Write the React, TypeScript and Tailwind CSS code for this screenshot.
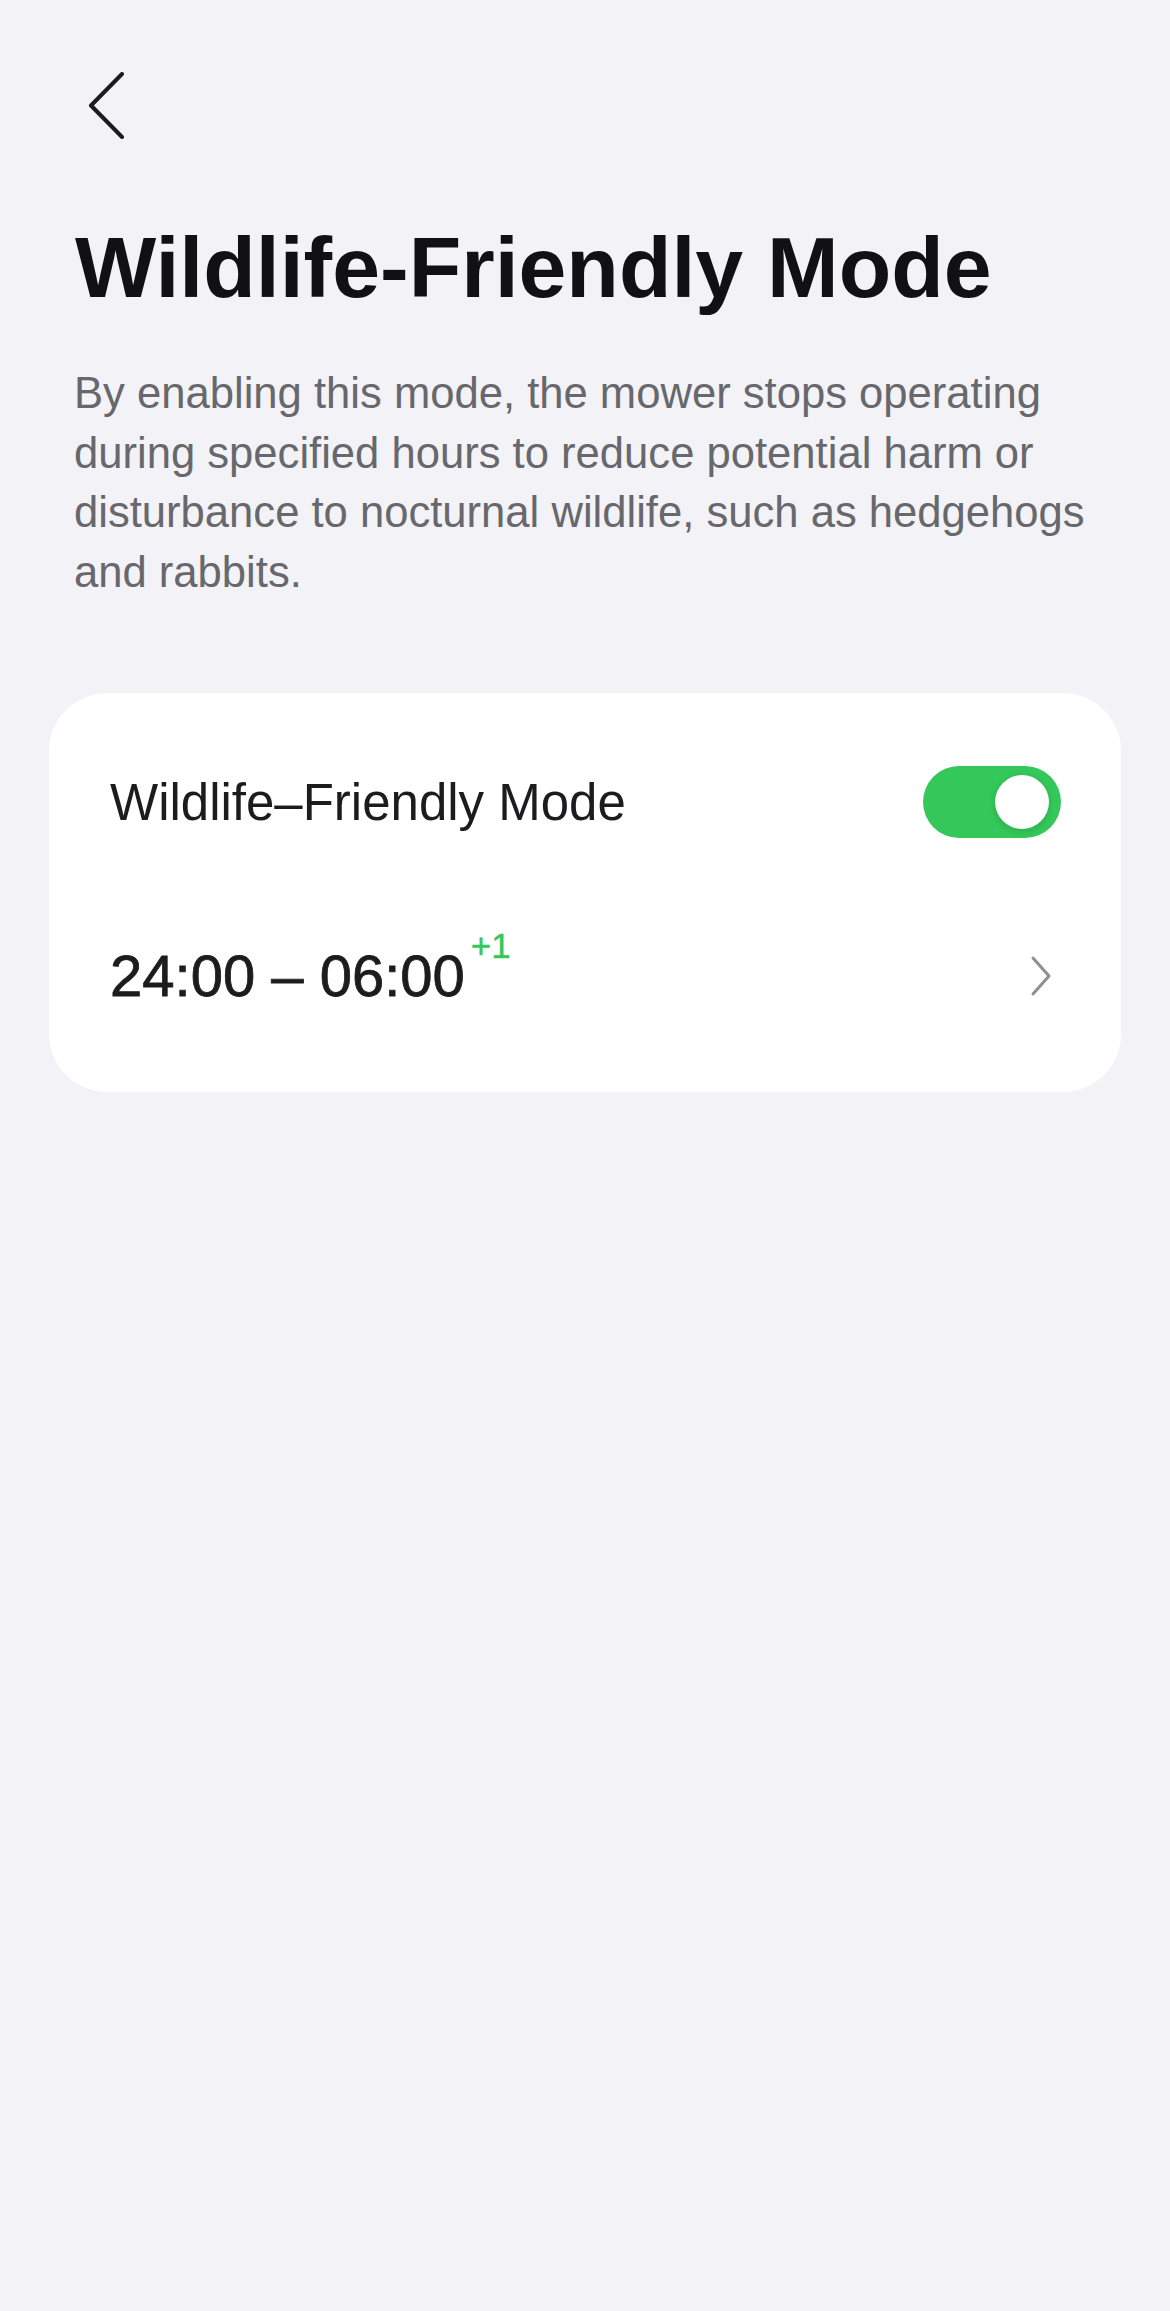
import React from "react";

export default function App() {
  return (
    <div
      className="min-h-[2311px] w-full bg-[#f2f2f7] text-[#1c1c1e]"
      style={{ fontFamily: '"Liberation Sans", Arial, sans-serif' }}
    >
      {/* Header */}
      <div className="pl-[87px] pt-[72px]">
        <svg width="38" height="67" viewBox="0 0 38 67" fill="none" className="block">
          <path d="M35 2 L4 33.5 L35 65" stroke="#1c1c1e" strokeWidth="4" strokeLinecap="round" strokeLinejoin="round" />
        </svg>
      </div>

      {/* Title */}
      <h1 className="mt-[85px] pl-[75px] text-[86px] font-bold leading-none tracking-normal text-[#111114]">
        Wildlife-Friendly Mode
      </h1>

      {/* Description */}
      <p className="mt-[54px] pl-[74px] w-[1120px] text-[43.6px] leading-[59.5px] text-[#67676c]">
        By enabling this mode, the mower stops operating during specified hours to reduce potential harm or disturbance to nocturnal wildlife, such as hedgehogs and rabbits.
      </p>

      {/* Card */}
      <div className="mx-[49px] mt-[91px] h-[399px] rounded-[58px] bg-white pl-[61px] pr-[60px] pt-[73px]">
        <div className="flex h-[72px] items-center justify-between">
          <span className="text-[51px] leading-none text-[#1c1c1e]">Wildlife–Friendly Mode</span>
          <div className="flex h-[72px] w-[138px] items-center justify-end rounded-full bg-[#34c759] pr-[12px]">
            <div className="h-[54px] w-[54px] rounded-full bg-white shadow-[0_2px_6px_rgba(0,0,0,0.15)]" />
          </div>
        </div>

        <div className="mt-[102px] flex h-[72px] items-center justify-between">
          <span className="relative text-[58px] leading-none text-[#1c1c1e] [-webkit-text-stroke:0.8px_#1c1c1e]">
            24:00 – 06:00
            <span className="absolute left-full top-[-19px] ml-[6px] text-[35px] leading-none text-[#34c759] [-webkit-text-stroke:0.4px_#34c759]">+1</span>
          </span>
          <svg width="22" height="42" viewBox="0 0 22 42" fill="none" className="mr-[9px] block">
            <path d="M3 3 L19 21 L3 39" stroke="#8e8e93" strokeWidth="3" strokeLinecap="round" strokeLinejoin="round" />
          </svg>
        </div>
      </div>
    </div>
  );
}
